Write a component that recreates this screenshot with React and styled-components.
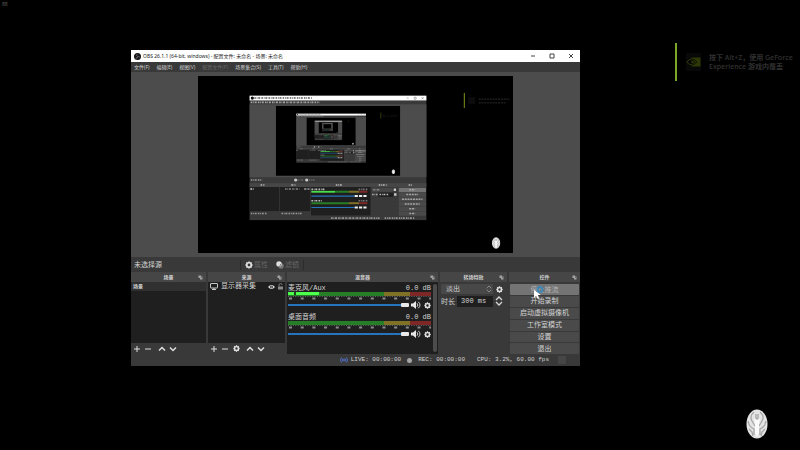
import React from "react";
import styled, { createGlobalStyle, css } from "styled-components";

const GlobalStyle = createGlobalStyle`
  * { box-sizing: border-box; }
  html, body { margin: 0; background: #000; }
  button, input, select { font: inherit; color: inherit; margin: 0; padding: 0; border: 0; border-radius: 0; }
  ul { list-style: none; margin: 0; padding: 0; }
  svg { display: block; flex: none; }
`;

const uiFont = `"Open Sans", "Noto Sans CJK SC", sans-serif`;
const fixedFont = `"Liberation Mono", "Noto Sans CJK SC", monospace`;

const Desktop = styled.main`
  position: relative;
  min-height: 100vh;
  overflow: hidden;
  background: #000;
  font-family: ${uiFont};
`;

const Counter = styled.span`
  position: absolute;
  left: 2px;
  top: 1px;
  font-size: 5px;
  line-height: 6px;
  color: #666;
`;

const Toast = styled.aside`
  position: absolute;
  top: 43px;
  right: 8px;
  display: flex;
  align-items: center;
  width: 117px;
  height: 38px;
  border-left: 2px solid #7da827;
  padding-left: 9px;
  gap: 8px;
  white-space: nowrap;
  font-size: 7px;
  line-height: 9px;
  font-weight: 600;
  color: #303030;
`;

const ToastIcon = styled.div`
  display: grid;
  place-items: center;
  width: 19px;
  height: 18px;
  background: #080808;
`;

const EmblemSpot = styled.div`
  position: absolute;
  right: 32px;
  bottom: 11px;
`;

const Window = styled.section`
  position: absolute;
  left: 131px;
  top: 50px;
  width: 449px;
  display: flex;
  flex-direction: column;
  background: #393939;
  color: #d2d2d2;
`;

const TitleBar = styled.header`
  display: flex;
  align-items: center;
  height: 12px;
  padding: 0 5px 0 3px;
  gap: 2px;
  background: #fff;
  color: #222;
  font-size: 5px;
  line-height: 8px;
  white-space: nowrap;
`;

const Title = styled.span`
  flex: 1;
  font-family: "Noto Sans", "Noto Sans CJK SC", sans-serif;
`;

const WindowButtons = styled.div`
  display: flex;
  gap: 11px;
`;

const PlainButton = styled.button`
  display: grid;
  place-items: center;
  width: 8px;
  height: 8px;
  background: transparent;
  color: ${(p) => p.$tone || "#dedede"};
`;

const MenuBar = styled.nav`
  display: flex;
  align-items: center;
  height: 10px;
  padding: 0 3px;
  gap: 7px;
  background: #393939;
`;

const MenuItem = styled.button`
  background: transparent;
  font-size: 5px;
  line-height: 8px;
  white-space: nowrap;
  &:disabled { color: #676767; }
`;

const PreviewArea = styled.div`
  display: flex;
  justify-content: center;
  padding: 4px 67px;
  background: #4c4c4c;
  svg { width: 100%; height: auto; }
`;

const SourceBar = styled.div`
  display: flex;
  align-items: center;
  height: 15px;
  padding: 0 3px;
  font-family: ${fixedFont};
  font-size: 7px;
  line-height: 10px;
`;

const SourceName = styled.span`
  width: 106px;
`;

const SourceAction = styled.button`
  display: flex;
  align-items: center;
  gap: 1px;
  height: 10px;
  padding: 0 4px;
  border-left: 1px solid #2b2b2b;
  background: transparent;
  line-height: 10px;
  color: #656565;
  & + & { border-left: 0; }
  &:last-child { border-right: 1px solid #2b2b2b; }
`;

const Docks = styled.div`
  display: grid;
  grid-template-columns: 75fr 77fr 151fr 67fr 71fr;
  gap: 2px;
`;

const Dock = styled.section`
  display: flex;
  flex-direction: column;
  min-width: 0;
`;

const DockTitle = styled.h2`
  display: grid;
  grid-template-columns: 8px 1fr 8px;
  align-items: center;
  height: 10px;
  margin: 0;
  background: #464646;
  font-size: 5px;
  line-height: 8px;
  font-weight: 600;
  text-align: center;
  svg { grid-column: 3; }
  span { grid-column: 2; }
`;

const List = styled.ul`
  flex: 1;
  min-height: 61px;
  background: #1f1f1f;
`;

const ListItem = styled.li`
  display: flex;
  align-items: center;
  height: 9px;
  padding: 0 2px;
  gap: 3px;
  line-height: 9px;
  white-space: nowrap;
  ${(p) =>
    p.$selected
      ? css`
          background: #303030;
          font-size: 5px;
          font-weight: 600;
        `
      : css`
          font-family: ${fixedFont};
          font-size: 7px;
        `}
`;

const Grow = styled.span`
  flex: 1;
`;

const ListTools = styled.div`
  display: flex;
  align-items: center;
  height: 11px;
  padding: 0 2px;
  gap: 3px;
`;

const Gap = styled.span`
  width: 0;
`;

const Mixer = styled.div`
  display: flex;
  flex: 1;
  min-width: 0;
  gap: 2px;
  padding: 2px 1px;
  background: #1f1f1f;
`;

const Strips = styled.div`
  flex: 1;
  min-width: 0;
  display: flex;
  flex-direction: column;
`;

const ScrollBar = styled.div`
  flex: none;
  width: 4px;
  border-radius: 2px;
  background: #4c4c4c;
`;

const Strip = styled.div`
  display: flex;
  flex-direction: column;
  height: 29px;
`;

const StripHead = styled.div`
  display: flex;
  justify-content: space-between;
  font-family: ${fixedFont};
  font-size: 7px;
  line-height: 8px;
  white-space: nowrap;
`;

const Meter = styled.div`
  display: flex;
  height: 4px;
  background: linear-gradient(90deg, #267f26 67%, #7f7226 67% 85%, #7f2626 85%);
`;

const Level = styled.div`
  height: 3px;
  background: linear-gradient(90deg, #4cff4c 18%, #1d3f1d 18% 26%, #4cff4c 26%);
`;

const Scale = styled.svg`
  width: 100%;
  height: 4px;
`;

const StripControls = styled.div`
  display: flex;
  align-items: center;
  height: 10px;
  gap: 2px;
`;

const Slider = styled.input`
  appearance: none;
  flex: 1;
  min-width: 0;
  height: 6px;
  background: linear-gradient(#2475bd, #2475bd) center / 100% 2px no-repeat;
  &::-webkit-slider-thumb {
    appearance: none;
    width: 8px;
    height: 4px;
    border-radius: 1px;
    background: #e8e8e8;
  }
`;

const Form = styled.div`
  display: flex;
  flex-direction: column;
  gap: 2px;
  padding: 2px 2px 0 1px;
  font-family: ${fixedFont};
  font-size: 7px;
`;

const FormRow = styled.div`
  display: flex;
  align-items: center;
  gap: 2px;
  height: 10px;
  padding-right: 2px;
  white-space: nowrap;
`;

const SelectBox = styled.div`
  position: relative;
  flex: 1;
  svg { position: absolute; right: 1px; top: 1px; }
`;

const Select = styled.select`
  appearance: none;
  width: 100%;
  height: 10px;
  padding: 0 5px;
  background: #484848;
  line-height: 10px;
`;

const DurationInput = styled.input`
  flex: 1;
  min-width: 0;
  height: 11px;
  padding: 0 4px;
  background: #1f1f1f;
`;

const Controls = styled.div`
  position: relative;
  flex: 1;
  display: flex;
  flex-direction: column;
  gap: 1px;
  height: 72px;
  padding: 2px 1px 0 1px;
`;

const ControlButton = styled.button`
  flex: 1;
  min-height: 0;
  border-radius: 1px;
  background: ${(p) => (p.$hot ? "#747474" : "#4a4a4a")};
  font-family: ${fixedFont};
  font-size: 7px;
  line-height: 10px;
  color: ${(p) => (p.$hot ? "#b5b5b5" : "#d2d2d2")};
`;

const Pointer = styled.svg`
  position: absolute;
  left: 24px;
  top: 4px;
`;

const StatusBar = styled.footer`
  display: flex;
  align-items: center;
  justify-content: flex-end;
  height: 12px;
  padding: 0 14px 0 0;
  gap: 12px;
  font-family: ${fixedFont};
  font-size: 6px;
  line-height: 10px;
  white-space: pre;
`;

const Status = styled.span`
  display: flex;
  align-items: center;
  gap: 3px;
`;

const StatusBlock = styled.span`
  width: 8px;
  height: 8px;
  margin-left: 3px;
  background: #464646;
`;

function Gear({ size = 8, color = "#e2e2e2" }) {
  return (
    <svg width={size} height={size} viewBox="0 0 16 16">
      <circle cx="8" cy="8" r="4.4" fill="none" stroke={color} strokeWidth="3.2" />
      <path
        d="M8 .8v3M8 12.200v3M.8 8h3M12.200 8h3M2.900 2.900l2 2M11.100 11.100l2 2M2.900 13.100l2-2M11.100 4.900l2-2"
        stroke={color}
        strokeWidth="3"
      />
    </svg>
  );
}

const glyphs = {
  plus: "M4 1v6M1 4h6",
  minus: "M1 4h6",
  up: "M1 5.500l3-3 3 3",
  down: "M1 2.500l3 3 3-3",
  close: "M2 2l4 4M6 2l-4 4",
  max: "M2 2h4v4h-4z",
  min: "M2 4h4",
};

function Line({ kind, width = 1 }) {
  return (
    <svg width="8" height="8" viewBox="0 0 8 8" fill="none" stroke="currentColor" strokeWidth={width}>
      <path d={glyphs[kind]} />
    </svg>
  );
}

function ObsLogo() {
  return (
    <svg width="7" height="7" viewBox="0 0 14 14">
      <circle cx="7" cy="7" r="7" fill="#16161a" />
      <path d="M6.500 2.200a3 3 0 0 0 .3 4.500M11.600 8.500a3 3 0 0 0-4.200-1M3 10.200a3 3 0 0 0 4-2.800" fill="none" stroke="#aaa" strokeWidth="1.100" />
    </svg>
  );
}

function FloatIcon() {
  return (
    <svg width="5" height="5" viewBox="0 0 10 10" fill="#a4a4a4">
      <path d="M1 1h5v2h3v6H4V6H1z" />
      <path d="M5.500 4.500h2v2" fill="none" stroke="#464646" />
    </svg>
  );
}

function Monitor() {
  return (
    <svg width="8" height="7" viewBox="0 0 16 14" fill="none" stroke="#d8d8d8" strokeWidth="1.800">
      <rect x="1" y="1" width="14" height="9" rx="1" />
      <path d="M8 10v3M4 13h8" />
    </svg>
  );
}

function Eye() {
  return (
    <svg width="7" height="6" viewBox="0 0 14 12">
      <path d="M0 6Q7-2 14 6Q7 14 0 6z" fill="#dedede" />
      <circle cx="7" cy="6" r="2.700" fill="#1f1f1f" />
      <circle cx="7" cy="6" r="1.200" fill="#dedede" />
    </svg>
  );
}

function Lock() {
  return (
    <svg width="5" height="7" viewBox="0 0 10 14">
      <path d="M2 7V4a3 3 0 0 1 6 0" fill="none" stroke="#8b8b8b" strokeWidth="1.600" />
      <rect x="0" y="7" width="10" height="6" fill="#8b8b8b" />
    </svg>
  );
}

function Filters() {
  return (
    <svg width="8" height="8" viewBox="0 0 16 16">
      <circle cx="10" cy="10" r="5.500" fill="#777" />
      <circle cx="6" cy="6" r="5.500" fill="#dedede" />
      <path d="M9 6a4 4 0 0 1-4 5" fill="none" stroke="#555" strokeWidth="1.500" />
    </svg>
  );
}

function Speaker() {
  return (
    <svg width="10" height="8" viewBox="0 0 20 16">
      <path d="M0 5h4l6-5v16l-6-5H0z" fill="#e8e8e8" />
      <path d="M12 4.500q3.500 3.500 0 7M14.500 1.500q7 6.500 0 13" fill="none" stroke="#e8e8e8" strokeWidth="1.800" />
    </svg>
  );
}

function SpinArrows({ width = 8, height = 10, tone = "#d6d6d6" }) {
  return (
    <svg width={width} height={height} viewBox="0 0 8 10" fill="none" stroke={tone} strokeWidth="1.300">
      <path d="M1 4l3-3 3 3M1 6l3 3 3-3" />
    </svg>
  );
}

function NvidiaEye() {
  return (
    <svg width="15" height="10" viewBox="0 0 30 20">
      <path d="M11 1h18v18H11z" fill="#2c3806" />
      <path d="M1 10Q8 2 15 4q6 2 9 6-4 6-11 6T1 10z" fill="none" stroke="#2c3806" strokeWidth="2" />
      <path d="M11 4q7 0 11 6-4 5-11 6M7 10q3-5 7-3 3 1 4 3-4 4-7 3z" fill="none" stroke="#080a02" strokeWidth="1.500" />
    </svg>
  );
}

function EmblemShape() {
  return (
    <g>
      <ellipse cx="11" cy="15" rx="10.500" ry="14.500" fill="#e4e4e4" />
      <g fill="none" stroke="#a6a6a6" strokeWidth="1.300">
        <path d="M8 3Q3 7 6 12l3 5M14 3q5 4 2 9l-3 5" />
        <path d="M2 12q1 6 6 8v6M20 12q-1 6-6 8v6" />
        <path d="M3 20l3 3 1 4M19 20l-3 3-1 4" />
        <path d="M10 5v4l1 1 1-1V5" />
      </g>
      <path d="M8 9q3 4 6 0l-1 7v8l-2 4-2-4v-8z" fill="#fafafa" />
    </g>
  );
}

const miniText = [
  [143, 56, 146, "#555"],
  [134, 67, 174, "#a5a5a5"],
  [134, 264, 29, "#999"],
  [252, 264, 15, "#666"],
  [281, 264, 15, "#666"],
  [159, 277, 11, "#bbb"],
  [237, 277, 11, "#bbb"],
  [350, 277, 16, "#bbb"],
  [459, 277, 20, "#bbb"],
  [535, 277, 10, "#bbb"],
  [133, 287, 10, "#ddd"],
  [221, 287, 37, "#888"],
  [270, 287, 13, "#bbb"],
  [288, 288, 35, "#bbb"],
  [408, 288, 22, "#777"],
  [288, 317, 28, "#bbb"],
  [408, 317, 22, "#777"],
  [445, 289, 15, "#888"],
  [442, 301, 14, "#aaa"],
  [461, 301, 24, "#bbb"],
  [134, 349, 42, "#999"],
  [212, 349, 52, "#999"],
  [338, 361, 125, "#999"],
  [474, 361, 75, "#999"],
];

const miniButtons = [15, 30, 52, 38, 15, 15];

function Miniature({ depth }) {
  return (
    <g>
      <rect width="800" height="450" fill="#000" />
      <rect x="675" y="43" width="3" height="38" fill="#697f17" />
      <rect x="686" y="54" width="18" height="17" fill="#0c0c0c" />
      <path d="M713 59h79M713 68h68" stroke="#1c1c1c" strokeWidth="4" strokeDasharray="5 2" />
      <g transform="translate(746 409)">
        <EmblemShape />
      </g>
      {depth > 0 && (
        <g>
          <rect x="131" y="50" width="449" height="316" fill="#393939" />
          <rect x="131" y="50" width="449" height="12" fill="#fff" />
          <circle cx="138" cy="56" r="4" fill="#111" />
          <path d="M530 56h5M549 54h5v5h-5zM568 54l5 5M573 54l-5 5" fill="none" stroke="#444" />
          <rect x="131" y="72" width="449" height="185" fill="#4c4c4c" />
          <rect x="131" y="272" width="449" height="10" fill="#464646" />
          <rect x="131" y="282" width="75" height="61" fill="#1f1f1f" />
          <rect x="208" y="282" width="77" height="61" fill="#1f1f1f" />
          <rect x="287" y="282" width="151" height="72" fill="#1f1f1f" />
          <circle cx="248" cy="264" r="4" fill="#ccc" />
          <circle cx="276" cy="264" r="4" fill="#ccc" />
          {[0, 29].map((y) => (
            <g key={y} transform={`translate(0 ${y})`}>
              <path d="M288 294h95" stroke="#267f26" strokeWidth="5" />
              <path d="M383 294h26" stroke="#7f7226" strokeWidth="5" />
              <path d="M409 294h21" stroke="#7f2626" strokeWidth="5" />
              <path d="M288 305h110" stroke="#2475bd" strokeWidth="3" />
              <path d="M398 305h32" stroke="#eee" strokeWidth="5" strokeDasharray="8 3" />
            </g>
          ))}
          <path d="M288 294h60" stroke="#4cdf4c" strokeWidth="4" />
          <rect x="441" y="284" width="53" height="10" fill="#484848" />
          <rect x="458" y="296" width="38" height="11" fill="#1f1f1f" />
          <path d="M497 289h6M498 301h6" stroke="#ccc" strokeWidth="6" />
          {miniButtons.map((w, i) => (
            <g key={i}>
              <rect x="510" y={284 + i * 12} width="69" height="11" fill={i === 0 ? "#747474" : "#4a4a4a"} />
              <path d={`M${544 - w / 2} ${289 + i * 12}h${w}`} stroke="#a5a5a5" strokeWidth="4" strokeDasharray="5 2" />
            </g>
          ))}
          {miniText.map(([x, y, w, tone], i) => (
            <path key={i} d={`M${x} ${y}h${w}`} stroke={tone} strokeWidth="4" strokeDasharray="4 2 2 2 5 3" />
          ))}
          <g transform="translate(198 76) scale(0.394)">
            <Miniature depth={depth - 1} />
          </g>
        </g>
      )}
    </g>
  );
}

function DockPanel({ title, children }) {
  return (
    <Dock>
      <DockTitle>
        <span>{title}</span>
        <FloatIcon />
      </DockTitle>
      {children}
    </Dock>
  );
}

function Tools({ withGear }) {
  return (
    <ListTools>
      <PlainButton aria-label="添加"><Line kind="plus" /></PlainButton>
      <PlainButton aria-label="移除"><Line kind="minus" /></PlainButton>
      {withGear ? (
        <PlainButton aria-label="属性"><Gear size={7} /></PlainButton>
      ) : (
        <Gap />
      )}
      {withGear && <Gap />}
      <PlainButton aria-label="上移"><Line kind="up" width={1.5} /></PlainButton>
      <PlainButton aria-label="下移"><Line kind="down" width={1.5} /></PlainButton>
    </ListTools>
  );
}

function MixerStrip({ name, level }) {
  return (
    <Strip>
      <StripHead>
        <span>{name}</span>
        <span>0.0 dB</span>
      </StripHead>
      <Meter>
        <Level style={{ width: `${level}%` }} />
      </Meter>
      <Scale viewBox="0 0 142 4" preserveAspectRatio="none" fill="none">
        <path d="M0 .5h142" strokeDasharray="1 1.400" stroke="#666" />
        <path d="M1 2.500h142" strokeWidth="2" strokeDasharray="3 8.600" stroke="#8c8c8c" />
      </Scale>
      <StripControls>
        <Slider type="range" aria-label={name} min="0" max="100" defaultValue="100" />
        <PlainButton aria-label="静音"><Speaker /></PlainButton>
        <Gap />
        <PlainButton aria-label="设置"><Gear size={7} /></PlainButton>
      </StripControls>
    </Strip>
  );
}

const menus = ["文件(F)", "编辑(E)", "视图(V)", "配置文件(P)", "场景集合(S)", "工具(T)", "帮助(H)"];
const controls = ["停止推流", "开始录制", "启动虚拟摄像机", "工作室模式", "设置", "退出"];

export default function App() {
  return (
    <Desktop>
      <GlobalStyle />
      <Counter>88</Counter>

      <Toast>
        <ToastIcon><NvidiaEye /></ToastIcon>
        <div>
          按下 Alt+Z，使用 GeForce
          <br />
          Experience 游戏内覆盖
        </div>
      </Toast>

      <Window>
        <TitleBar>
          <ObsLogo />
          <Title>OBS 26.1.1 (64-bit, windows) - 配置文件: 未命名 - 场景: 未命名</Title>
          <WindowButtons>
            <PlainButton $tone="#444" aria-label="最小化"><Line kind="min" /></PlainButton>
            <PlainButton $tone="#444" aria-label="最大化"><Line kind="max" /></PlainButton>
            <PlainButton $tone="#444" aria-label="关闭"><Line kind="close" /></PlainButton>
          </WindowButtons>
        </TitleBar>

        <MenuBar>
          {menus.map((m) => (
            <MenuItem key={m} disabled={m === "配置文件(P)"}>{m}</MenuItem>
          ))}
        </MenuBar>

        <PreviewArea>
          <svg viewBox="0 0 800 450">
            <Miniature depth={4} />
          </svg>
        </PreviewArea>

        <SourceBar>
          <SourceName>未选择源</SourceName>
          <SourceAction disabled><Gear />属性</SourceAction>
          <SourceAction disabled><Filters />滤镜</SourceAction>
        </SourceBar>

        <Docks>
          <DockPanel title="场景">
            <List><ListItem $selected>场景</ListItem></List>
            <Tools />
          </DockPanel>

          <DockPanel title="来源">
            <List>
              <ListItem>
                <Monitor />
                <Grow>显示器采集</Grow>
                <Eye />
                <Lock />
              </ListItem>
            </List>
            <Tools withGear />
          </DockPanel>

          <DockPanel title="混音器">
            <Mixer>
              <Strips>
                <MixerStrip name="麦克风/Aux" level={22} />
                <MixerStrip name="桌面音频" level={0} />
              </Strips>
              <ScrollBar />
            </Mixer>
          </DockPanel>

          <DockPanel title="转场特效">
            <Form>
              <FormRow>
                <SelectBox>
                  <Select aria-label="转场特效" defaultValue="fade">
                    <option value="fade">淡出</option>
                  </Select>
                  <SpinArrows width={6} height={8} tone="#8a8a8a" />
                </SelectBox>
                <PlainButton aria-label="转场设置"><Gear size={7} /></PlainButton>
              </FormRow>
              <FormRow>
                <label htmlFor="duration">时长</label>
                <DurationInput id="duration" defaultValue="300 ms" />
                <SpinArrows />
              </FormRow>
            </Form>
          </DockPanel>

          <DockPanel title="控件">
            <Controls>
              {controls.map((c, i) => (
                <ControlButton key={c} $hot={i === 0}>{c}</ControlButton>
              ))}
              <Pointer width="14" height="14" viewBox="0 0 14 14">
                <circle cx="7" cy="3.500" r="2.500" fill="none" stroke="#3d87b8" strokeWidth="2" />
                <path d="M1 4v8l2-2 2 3 1-1-1-3h3z" fill="#fff" />
              </Pointer>
            </Controls>
          </DockPanel>
        </Docks>

        <StatusBar>
          <Status>
            <svg width="8" height="6" viewBox="0 0 16 12" fill="none" stroke="#5277d6" strokeWidth="1.800">
              <path d="M3 1q-4 5 0 10M6 3q-2 3 0 6M13 1q4 5 0 10M10 3q2 3 0 6" />
              <circle cx="8" cy="6" r="1" />
            </svg>
            LIVE: 00:00:00
            <Gap />
            <svg width="5" height="5" viewBox="0 0 10 10"><circle cx="5" cy="5" r="5" fill="#a5a5a5" /></svg>
            <Gap />
            REC: 00:00:00
          </Status>
          <Status>
            CPU: 3.2%, 60.00 fps
            <Gap />
            <StatusBlock />
          </Status>
        </StatusBar>
      </Window>

      <EmblemSpot>
        <svg width="22" height="30" viewBox="0 0 22 30"><EmblemShape /></svg>
      </EmblemSpot>
    </Desktop>
  );
}
